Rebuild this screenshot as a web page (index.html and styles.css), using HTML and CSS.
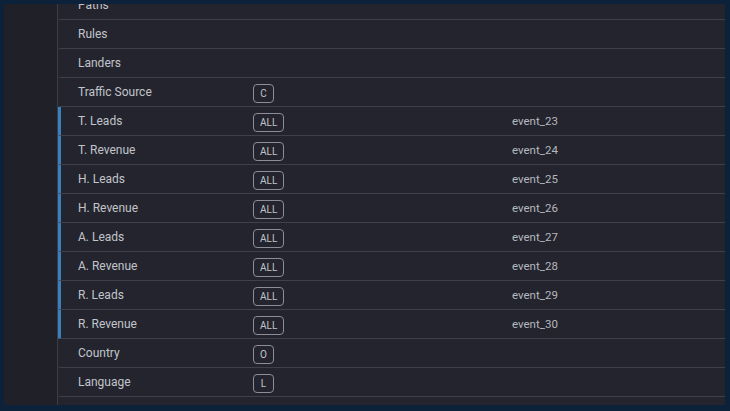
FILE: index.html
```html
<!DOCTYPE html>
<html>
<head>
<meta charset="utf-8">
<link rel="stylesheet" href="styles.css">
</head>
<body>
<div class="frame">
  <div class="side"></div>
  <div class="table">
    <div class="rows">
      <div class="row"><span class="name">Paths</span><span class="cell"></span><span class="ev"></span></div>
      <div class="row"><span class="name">Rules</span><span class="cell"></span><span class="ev"></span></div>
      <div class="row"><span class="name">Landers</span><span class="cell"></span><span class="ev"></span></div>
      <div class="row"><span class="name">Traffic Source</span><span class="cell"><span class="badge">C</span></span><span class="ev"></span></div>
      <div class="row active"><span class="name">T. Leads</span><span class="cell"><span class="badge">ALL</span></span><span class="ev">event_23</span></div>
      <div class="row active"><span class="name">T. Revenue</span><span class="cell"><span class="badge">ALL</span></span><span class="ev">event_24</span></div>
      <div class="row active"><span class="name">H. Leads</span><span class="cell"><span class="badge">ALL</span></span><span class="ev">event_25</span></div>
      <div class="row active"><span class="name">H. Revenue</span><span class="cell"><span class="badge">ALL</span></span><span class="ev">event_26</span></div>
      <div class="row active"><span class="name">A. Leads</span><span class="cell"><span class="badge">ALL</span></span><span class="ev">event_27</span></div>
      <div class="row active"><span class="name">A. Revenue</span><span class="cell"><span class="badge">ALL</span></span><span class="ev">event_28</span></div>
      <div class="row active"><span class="name">R. Leads</span><span class="cell"><span class="badge">ALL</span></span><span class="ev">event_29</span></div>
      <div class="row active"><span class="name">R. Revenue</span><span class="cell"><span class="badge">ALL</span></span><span class="ev">event_30</span></div>
      <div class="row"><span class="name">Country</span><span class="cell"><span class="badge">O</span></span><span class="ev"></span></div>
      <div class="row"><span class="name">Language</span><span class="cell"><span class="badge">L</span></span><span class="ev"></span></div>
      <div class="row"><span class="name"></span><span class="cell"></span><span class="ev"></span></div>
    </div>
  </div>
</div>
</body>
</html>
```

FILE: styles.css
```css
html, body {
  margin: 0;
  padding: 0;
  background: #0b223a;
  width: 730px;
  height: 411px;
  overflow: hidden;
}
.frame {
  display: flex;
  box-sizing: border-box;
  height: 411px;
  padding: 4px 5px 6px 4px;
}
.side {
  width: 53px;
  flex: none;
  background: #202128;
}
.table {
  flex: 1;
  background: #23242d;
  border-left: 1px solid #3b3d47;
  overflow: hidden;
  font-family: Roboto, "Noto Sans", sans-serif;
  color: #c2c4cb;
}
.rows {
  margin-top: -13px;
}
.row {
  display: flex;
  align-items: center;
  height: 28px;
  border-bottom: 1px solid #3e404a;
  font-size: 12px;
  margin-left: -1px;
  border-left: 4px solid transparent;
}
.row.active {
  border-left-color: #3a80c0;
}
.name {
  width: 175px;
  padding-left: 17px;
  flex: none;
  margin-top: -1px;
}
.cell {
  width: 259px;
  flex: none;
  display: flex;
}
.badge {
  box-sizing: border-box;
  height: 19px;
  min-width: 21px;
  padding: 0 6px;
  border: 1px solid #8b8e97;
  border-radius: 4px;
  font-size: 10px;
  display: inline-flex;
  align-items: center;
  justify-content: center;
  color: #c2c4cb;
  margin-top: 2px;
}
.ev {
  font-size: 11.5px;
  color: #b5b8bf;
}
```
